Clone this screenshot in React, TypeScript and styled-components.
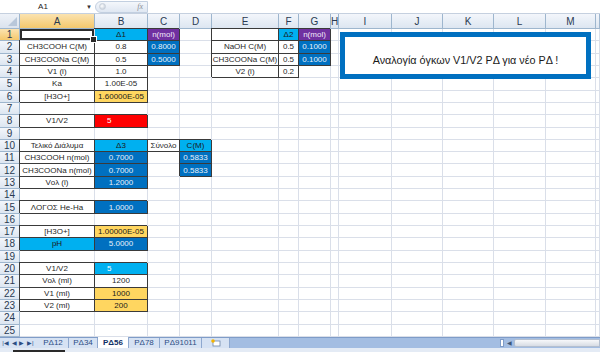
import React from 'react';
import styled, { createGlobalStyle, css } from 'styled-components';

const GlobalStyle = createGlobalStyle`
    html, body {
        margin: 0;
        padding: 0;
        background: #ffffff;
        overflow: hidden;
    }
    * {
        box-sizing: border-box;
    }
`;

const COLS = ['A', 'B', 'C', 'D', 'E', 'F', 'G', 'H', 'I', 'J', 'K', 'L', 'M', ''];
const COL_WIDTHS = [20, 75, 53, 32, 32, 67, 20, 32, 8, 53, 51, 51, 52, 50, 4];
const ROW_COUNT = 25;

const CYAN = '#00b0f0';
const BLUE = '#0070c0';
const PURPLE = '#7030a0';
const GOLD = '#ffd660';
const RED = '#ff0000';

type CellData = {
    text?: string;
    bg?: string;
    fg?: string;
    border?: boolean;
    align?: 'left' | 'center';
};

const lbl = (text: string): CellData => ({ text, border: true });
const blue = (text: string): CellData => ({ text, bg: BLUE, fg: '#e8f0fa', border: true });
const cyan = (text: string): CellData => ({ text, bg: CYAN, fg: '#1a1a1a', border: true });
const gold = (text: string): CellData => ({ text, bg: GOLD, fg: '#1a1a1a', border: true });

// row number -> column letter -> cell
const DATA: Record<number, Record<string, CellData>> = {
    1: { B: cyan('Δ1'), C: { text: 'n(mol)', bg: PURPLE, fg: '#f2e8fa', border: true }, E: lbl(''), F: cyan('Δ2'), G: { text: 'n(mol)', bg: PURPLE, fg: '#f2e8fa', border: true } },
    2: { A: lbl('CH3COOH C(M)'), B: lbl('0.8'), C: blue('0.8000'), E: lbl('NaOH C(M)'), F: lbl('0.5'), G: blue('0.1000') },
    3: { A: lbl('CH3COONa C(M)'), B: lbl('0.5'), C: blue('0.5000'), E: lbl('CH3COONa C(M)'), F: lbl('0.5'), G: blue('0.1000') },
    4: { A: lbl('V1 (l)'), B: lbl('1.0'), E: lbl('V2 (l)'), F: lbl('0.2') },
    5: { A: lbl('Ka'), B: lbl('1.00E-05') },
    6: { A: lbl('[H3O+]'), B: gold('1.60000E-05') },
    8: { A: lbl('V1/V2'), B: { text: '5', bg: RED, fg: '#ffffff', border: true, align: 'left' } },
    10: { A: lbl('Τελικό Διάλυμα'), B: cyan('Δ3'), C: lbl('Σύνολο'), D: cyan('C(M)') },
    11: { A: lbl('CH3COOH n(mol)'), B: blue('0.7000'), D: blue('0.5833') },
    12: { A: lbl('CH3COONa  n(mol)'), B: blue('0.7000'), D: blue('0.5833') },
    13: { A: lbl('Vολ (l)'), B: blue('1.2000') },
    15: { A: lbl('ΛΟΓΟΣ He-Ha'), B: blue('1.0000') },
    17: { A: lbl('[H3O+]'), B: gold('1.00000E-05') },
    18: { A: cyan('pH'), B: blue('5.0000') },
    20: { A: lbl('V1/V2'), B: { text: '5', bg: CYAN, fg: '#ffffff', border: true, align: 'left' } },
    21: { A: lbl('Vολ (ml)'), B: lbl('1200') },
    22: { A: lbl('V1 (ml)'), B: gold('1000') },
    23: { A: lbl('V2 (ml)'), B: gold('200') },
};

const Window = styled.div`
    position: relative;
    width: 600px;
    height: 352px;
    display: flex;
    flex-direction: column;
    background: #ffffff;
    font-family: 'Liberation Sans', Arial, sans-serif;
    overflow: hidden;
`;

const FormulaBar = styled.div`
    height: 14px;
    display: flex;
    align-items: center;
    border-bottom: 1px solid #c5d0df;
    background: #ffffff;
    flex-shrink: 0;
`;

const NameBox = styled.div`
    width: 84px;
    text-align: center;
    font-size: 8px;
    color: #222;
    padding-left: 2px;
`;

const DropArrow = styled.div`
    width: 10px;
    font-size: 6px;
    color: #333;
    text-align: center;
`;

const FxPill = styled.div`
    width: 53px;
    height: 12px;
    margin-left: 1px;
    border-radius: 6px 0 0 6px;
    border: 1px solid #c2cfe0;
    background: linear-gradient(#f4f7fb, #dfe7f2);
    display: flex;
    align-items: center;
    justify-content: space-between;
    padding: 0 4px 0 3px;
`;

const PillDot = styled.div`
    width: 7px;
    height: 7px;
    border-radius: 50%;
    background: radial-gradient(circle at 40% 40%, #ffffff, #b9c4d2);
    border: 1px solid #c8d0da;
`;

const FxLabel = styled.span`
    font-family: 'Liberation Serif', serif;
    font-style: italic;
    font-size: 8px;
    color: #8a8f96;
`;

const Grid = styled.div`
    display: grid;
    grid-template-columns: ${COL_WIDTHS.map((w) => `${w}px`).join(' ')};
    grid-template-rows: 15px repeat(${ROW_COUNT}, 12.32px);
    flex-shrink: 0;
`;

const headerBase = css<{ $selected?: boolean }>`
    display: flex;
    align-items: center;
    justify-content: center;
    font-size: 10px;
    color: #2a3a52;
    border-right: 1px solid #9eb6ce;
    border-bottom: 1px solid #9eb6ce;
    background: ${(p) =>
        p.$selected ? 'linear-gradient(#fbe3b0, #f5c86c)' : 'linear-gradient(#f3f6fb, #dde6f1)'};
`;

const Corner = styled.div`
    border-right: 1px solid #9eb6ce;
    border-bottom: 1px solid #9eb6ce;
    background: linear-gradient(#eef2f8, #dbe3ee);
    display: flex;
    align-items: flex-end;
    justify-content: flex-end;
    padding: 0 2px 2px 0;
`;

const CornerTriangle = styled.div`
    width: 0;
    height: 0;
    border-left: 9px solid transparent;
    border-bottom: 9px solid #b8c7da;
`;

const ColHead = styled.div<{ $selected?: boolean }>`
    ${headerBase}
`;

const RowHead = styled.div<{ $selected?: boolean }>`
    ${headerBase}
    font-size: 10px;
`;

const Cell = styled.div<{ $bg?: string; $fg?: string; $border?: boolean; $align?: string }>`
    display: flex;
    align-items: center;
    justify-content: ${(p) => (p.$align === 'left' ? 'flex-start' : 'center')};
    padding-left: ${(p) => (p.$align === 'left' ? '12px' : '0')};
    font-size: 8px;
    white-space: nowrap;
    overflow: hidden;
    background: ${(p) => p.$bg || '#ffffff'};
    color: ${(p) => p.$fg || '#1f1f1f'};
    border-right: 1px solid ${(p) => (p.$border ? '#3a3a3a' : '#dadfe9')};
    border-bottom: 1px solid ${(p) => (p.$border ? '#3a3a3a' : '#dadfe9')};
    ${(p) => p.$border && 'box-shadow: -1px -1px 0 #3a3a3a;'}
`;

const ActiveCell = styled.div`
    position: relative;
    background: #ffffff;
    border-right: 1px solid #dadfe9;
    border-bottom: 1px solid #dadfe9;
    box-shadow: inset 0 0 0 2px #2b2b2b;

    &::after {
        content: '';
        position: absolute;
        right: -3px;
        bottom: -3px;
        width: 5px;
        height: 5px;
        background: #2b2b2b;
        border: 1px solid #ffffff;
    }
`;

const Note = styled.div`
    position: absolute;
    left: 340px;
    top: 32px;
    width: 251px;
    height: 47px;
    border: 5px solid #0070c0;
    background: #ffffff;
    display: flex;
    align-items: flex-end;
    justify-content: center;
    padding-bottom: 8px;
    font-family: 'Liberation Sans', Arial, sans-serif;
    font-size: 10.8px;
    color: #1a1a1a;
`;

const TabBar = styled.div`
    height: 11px;
    display: flex;
    align-items: stretch;
    background: #a3bde2;
    border-top: 1px solid #7f9cc8;
    flex-shrink: 0;
`;

const NavButtons = styled.div`
    width: 38px;
    display: flex;
    align-items: center;
    justify-content: space-around;
    padding: 0 3px 0 1px;
    background: #d6e2f3;
    font-size: 6px;
    color: #2c4d83;
`;

const Tab = styled.div<{ $active?: boolean; $width: number }>`
    width: ${(p) => p.$width}px;
    display: flex;
    align-items: center;
    justify-content: center;
    font-size: 8px;
    color: ${(p) => (p.$active ? '#0f2f66' : '#2c4d83')};
    font-weight: ${(p) => (p.$active ? 700 : 400)};
    background: ${(p) => (p.$active ? '#ffffff' : '#d6e2f3')};
    border-right: 1px solid #8ea8cf;
    margin-top: ${(p) => (p.$active ? '-1px' : '0')};
`;

const NewSheet = styled.div`
    width: 28px;
    display: flex;
    align-items: center;
    justify-content: center;
    background: #d6e2f3;
    border-right: 1px solid #8ea8cf;
`;

const TabFiller = styled.div`
    flex: 1;
`;

const SplitHandle = styled.div`
    width: 4px;
    margin: 1px 0;
    background: #ffffff;
    border: 1px solid #7f9cc8;
`;

const ScrollLeft = styled.div`
    width: 10px;
    display: flex;
    align-items: center;
    justify-content: center;
    font-size: 6px;
    color: #3f5677;
`;

const ScrollTrack = styled.div`
    width: 86px;
    margin: 1px 0;
    background: linear-gradient(#f7f8fa, #d7dce4);
    border: 1px solid #b3bfd0;
    border-radius: 2px 0 0 2px;
`;

const StatusStrip = styled.div`
    flex: 1;
    background: #e4ebf5;
    display: flex;
    align-items: flex-end;
    padding-left: 13px;
`;

const StatusItem = styled.div`
    width: 52px;
    height: 2px;
    background: #2a2a2a;
`;

const TABS = [
    { name: 'PΔ12', width: 31 },
    { name: 'PΔ34', width: 29 },
    { name: 'PΔ56', width: 31, active: true },
    { name: 'PΔ78', width: 31 },
    { name: 'PΔ91011', width: 42 },
];

function NewSheetIcon() {
    return (
        <svg width="11" height="8" viewBox="0 0 11 8">
            <rect x="3" y="2" width="7" height="5" fill="#ffffff" stroke="#6d84a6" strokeWidth="0.8" />
            <circle cx="3" cy="2" r="1.8" fill="#f4b400" />
        </svg>
    );
}

export default function App() {
    const rows = Array.from({ length: ROW_COUNT }, (_, i) => i + 1);

    return (
        <Window>
            <GlobalStyle />
            <FormulaBar>
                <NameBox>A1</NameBox>
                <DropArrow>▼</DropArrow>
                <FxPill>
                    <PillDot />
                    <FxLabel>fx</FxLabel>
                </FxPill>
            </FormulaBar>
            <Grid>
                <Corner>
                    <CornerTriangle />
                </Corner>
                {COLS.map((c, i) => (
                    <ColHead key={`h${i}`} $selected={c === 'A'}>
                        {c}
                    </ColHead>
                ))}
                {rows.map((r) => (
                    <React.Fragment key={r}>
                        <RowHead $selected={r === 1}>{r}</RowHead>
                        {COLS.map((c, ci) => {
                            if (r === 1 && c === 'A') return <ActiveCell key={ci} />;
                            const cell = DATA[r]?.[c];
                            return (
                                <Cell
                                    key={ci}
                                    $bg={cell?.bg}
                                    $fg={cell?.fg}
                                    $border={cell?.border}
                                    $align={cell?.align}
                                >
                                    {cell?.text}
                                </Cell>
                            );
                        })}
                    </React.Fragment>
                ))}
            </Grid>
            <TabBar>
                <NavButtons>
                    <span>|◀</span>
                    <span>◀</span>
                    <span>▶</span>
                    <span>▶|</span>
                </NavButtons>
                {TABS.map((t) => (
                    <Tab key={t.name} $active={t.active} $width={t.width}>
                        {t.name}
                    </Tab>
                ))}
                <NewSheet>
                    <NewSheetIcon />
                </NewSheet>
                <TabFiller />
                <SplitHandle />
                <ScrollLeft>◀</ScrollLeft>
                <ScrollTrack />
            </TabBar>
            <StatusStrip>
                <StatusItem />
            </StatusStrip>
            <Note>Αναλογία όγκων V1/V2 PΔ για νέο PΔ !</Note>
        </Window>
    );
}
